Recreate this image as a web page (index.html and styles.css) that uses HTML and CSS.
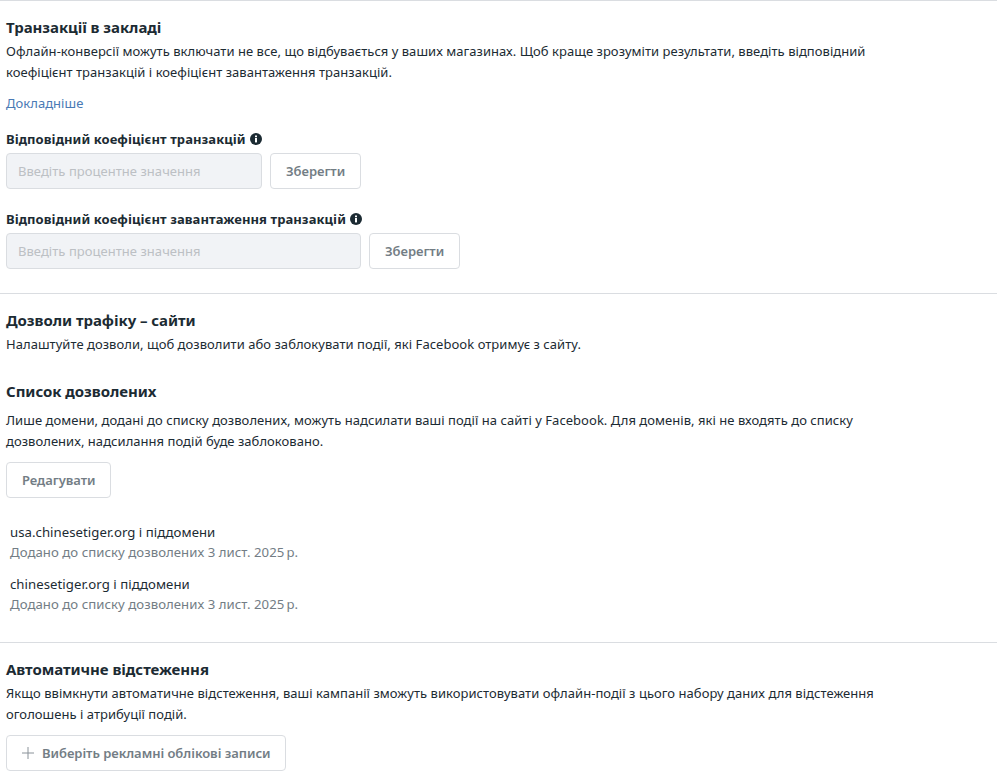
FILE: index.html
```html
<!DOCTYPE html>
<html lang="uk">
<head>
  <meta charset="UTF-8" />
  <title>Налаштування</title>
  <link rel="stylesheet" href="styles.css">
</head>
<body>
  <section class="section first">
    <h2>Транзакції в закладі</h2>
    <p class="text">Офлайн-конверсії можуть включати не все, що відбувається у ваших магазинах. Щоб краще зрозуміти результати, введіть відповідний коефіцієнт транзакцій і коефіцієнт завантаження транзакцій.</p>
    <a class="link" href="#">Докладніше</a>

    <label class="label">Відповідний коефіцієнт транзакцій
      <svg class="info" viewBox="0 0 12 12"><circle cx="6" cy="6" r="6" fill="#1c2b33"/><rect x="5" y="5" width="2" height="4.4" fill="#fff"/><rect x="5" y="2.5" width="2" height="1.7" fill="#fff"/></svg>
    </label>
    <div class="field">
      <input class="input input-short" type="text" placeholder="Введіть процентне значення" disabled />
      <button class="btn">Зберегти</button>
    </div>

    <label class="label label-second">Відповідний коефіцієнт завантаження транзакцій
      <svg class="info" viewBox="0 0 12 12"><circle cx="6" cy="6" r="6" fill="#1c2b33"/><rect x="5" y="5" width="2" height="4.4" fill="#fff"/><rect x="5" y="2.5" width="2" height="1.7" fill="#fff"/></svg>
    </label>
    <div class="field">
      <input class="input input-long" type="text" placeholder="Введіть процентне значення" disabled />
      <button class="btn">Зберегти</button>
    </div>
  </section>

  <section class="section traffic">
    <h2>Дозволи трафіку – сайти</h2>
    <p class="text">Налаштуйте дозволи, щоб дозволити або заблокувати події, які Facebook отримує з сайту.</p>

    <h3>Список дозволених</h3>
    <p class="text">Лише домени, додані до списку дозволених, можуть надсилати ваші події на сайті у Facebook. Для доменів, які не входять до списку дозволених, надсилання подій буде заблоковано.</p>
    <button class="btn btn-edit">Редагувати</button>

    <ul class="domains">
      <li>
        <p class="domain">usa.chinesetiger.org і піддомени</p>
        <p class="added">Додано до списку дозволених 3 лист. 2025&#8239;р.</p>
      </li>
      <li>
        <p class="domain">chinesetiger.org і піддомени</p>
        <p class="added">Додано до списку дозволених 3 лист. 2025&#8239;р.</p>
      </li>
    </ul>
  </section>

  <section class="section tracking">
    <h2>Автоматичне відстеження</h2>
    <p class="text">Якщо ввімкнути автоматичне відстеження, ваші кампанії зможуть використовувати офлайн-події з цього набору даних для відстеження оголошень і атрибуції подій.</p>
    <button class="btn btn-add">
      <svg class="plus" viewBox="0 0 12 12"><path d="M6 0v12M0 6h12" stroke="#8a9299" stroke-width="1" fill="none"/></svg>
      Виберіть рекламні облікові записи
    </button>
  </section>
</body>
</html>
```

FILE: styles.css
```css
:root {
  --dark: #1c2b33;
  --grey: #737d85;
  --muted: #bcc0c4;
  --border: #dadde1;
  --blue: #4a7ab5;
  --field: #f1f3f6;
}

body {
  margin: 0;
  background: #ffffff;
  color: var(--dark);
  font-family: "Noto Sans", sans-serif;
  font-size: 13px;
  letter-spacing: 0.04px;
}

h2,
h3,
p,
ul {
  margin: 0;
  padding: 0;
}

.section {
  border-top: 1px solid var(--border);
  padding: 0 6px;
}

.first {
  padding-top: 16px;
  height: 292px;
  box-sizing: border-box;
}

.traffic {
  padding-top: 16px;
  margin-top: 1px;
  height: 349px;
  box-sizing: border-box;
}

.tracking {
  padding-top: 16px;
}

h2 {
  font-size: 15px;
  font-weight: 700;
  line-height: 20px;
  letter-spacing: -0.05px;
}

h3 {
  font-size: 15px;
  font-weight: 700;
  line-height: 20px;
  letter-spacing: -0.05px;
  margin-top: 26px;
  margin-bottom: 9px;
}

.text {
  width: 880px;
  line-height: 21px;
  margin-top: 4px;
}

.link {
  display: block;
  color: var(--blue);
  text-decoration: none;
  line-height: 20px;
  margin-top: 10px;
}

.label {
  display: flex;
  align-items: center;
  gap: 4px;
  font-weight: 700;
  letter-spacing: 0.07px;
  line-height: 18px;
  margin-top: 17px;
  margin-bottom: 5px;
}

.label-second {
  margin-top: 21px;
}

.info {
  width: 12px;
  height: 12px;
}

.field {
  display: flex;
  gap: 8px;
}

.input {
  height: 36px;
  box-sizing: border-box;
  padding: 0 11px;
  background: var(--field);
  border: 1px solid var(--border);
  border-radius: 4px;
  font-family: inherit;
  font-size: 13px;
  letter-spacing: inherit;
}

.input::placeholder {
  color: var(--muted);
}

.input-short {
  width: 256px;
}

.input-long {
  width: 355px;
}

.btn {
  display: flex;
  align-items: center;
  height: 36px;
  box-sizing: border-box;
  padding: 0 15px;
  background: #ffffff;
  border: 1px solid var(--border);
  border-radius: 4px;
  color: var(--grey);
  font-family: inherit;
  font-size: 13px;
  letter-spacing: -0.04px;
  font-weight: 600;
}

.btn-edit {
  margin-top: 10px;
}

.plus {
  width: 12px;
  height: 12px;
  margin-right: 8px;
}

.btn-add {
  margin-top: 10px;
}

.domains {
  list-style: none;
  margin-top: 24px;
  padding-left: 4px;
}

.domains li {
  margin-bottom: 12px;
}

.domain,
.added {
  font-size: 13.2px;
  line-height: 20px;
}

.added {
  color: var(--grey);
}
```
